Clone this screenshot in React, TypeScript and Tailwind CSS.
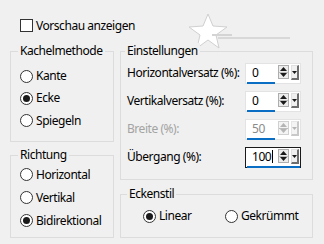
import React from "react";

const font = { fontFamily: '"Noto Sans", "Segoe UI", sans-serif', letterSpacing: "-0.45px" };

function Radio({ checked, label }: { checked?: boolean; label: string }) {
  return (
    <div className="flex items-center gap-[3px]">
      <span className="w-[13px] h-[13px] rounded-full border border-[#333333] bg-white flex items-center justify-center shrink-0">
        {checked && <span className="w-[7px] h-[7px] rounded-full bg-[#1a1a1a]" />}
      </span>
      <span className="text-[12px] leading-[16px] text-black">{label}</span>
    </div>
  );
}

function Group({
  title,
  titleLeft,
  className,
  children,
}: {
  title: string;
  titleLeft: string;
  className: string;
  children: React.ReactNode;
}) {
  return (
    <div className={"relative border border-[#dcdcdc] " + className}>
      <span
        className={
          "absolute -top-[9px] px-[2px] bg-[#f0f0f0] text-[12px] leading-[16px] text-black " + titleLeft
        }
      >
        {title}
      </span>
      {children}
    </div>
  );
}

function Spin({
  value,
  disabled,
  focused,
}: {
  value: string;
  disabled?: boolean;
  focused?: boolean;
}) {
  const arrow = disabled ? "#b5b5b5" : "#1a1a1a";
  return (
    <div
      className={
        "relative w-[56px] h-[21px] bg-white flex items-start border shrink-0 " +
        (focused ? "border-[#1a1a1a]" : "border-[#e3e3e3]")
      }
    >
      <div className="w-[31px] h-full flex items-center pl-[6px] pb-[2px]">
        <span
          className={
            "text-[12px] leading-[16px] " + (disabled ? "text-[#8a8a8a]" : "text-black")
          }
        >
          {value}
        </span>
        {focused && <span className="w-[1px] h-[13px] bg-black ml-[1px]" />}
      </div>
      <div
        className={
          "mt-[1px] ml-[1px] w-[11px] h-[14px] border flex flex-col " +
          (disabled ? "border-[#d0d0d0] bg-[#f4f4f4]" : "border-[#adadad] bg-[#ececec]")
        }
      >
        <div className="flex-1 flex items-center justify-center border-b border-[#bdbdbd]">
          <svg width="7" height="4" viewBox="0 0 7 4">
            <polygon points="3.5,0 7,4 0,4" fill={arrow} />
          </svg>
        </div>
        <div className="flex-1 flex items-center justify-center">
          <svg width="7" height="4" viewBox="0 0 7 4">
            <polygon points="0,0 7,0 3.5,4" fill={arrow} />
          </svg>
        </div>
      </div>
      <div
        className={
          "mt-[1px] ml-[2px] w-[8px] h-[15px] border-t border-l border-r-2 border-b-2 flex items-center justify-center " +
          (disabled
            ? "border-t-[#e6e6e6] border-l-[#e6e6e6] border-r-[#c8c8c8] border-b-[#c8c8c8] bg-[#f4f4f4]"
            : "border-t-[#e0e0e0] border-l-[#e0e0e0] border-r-[#6e6e6e] border-b-[#6e6e6e] bg-[#f0f0f0]")
        }
      >
        <svg width="5" height="3" viewBox="0 0 5 3">
          <polygon points="0,0 5,0 2.5,3" fill={arrow} />
        </svg>
      </div>
      <div
        className={
          "absolute bottom-[-1px] left-[1px] h-[2px] bg-[#0a6ec5] " +
          (focused ? "w-[53px]" : "w-[28px]")
        }
      />
    </div>
  );
}

function Row({
  label,
  value,
  disabled,
  focused,
}: {
  label: string;
  value: string;
  disabled?: boolean;
  focused?: boolean;
}) {
  return (
    <div className="h-[21px] flex items-center">
      <span
        className={
          "flex-1 whitespace-nowrap text-[12px] leading-[16px] pb-[2px] " +
          (disabled ? "text-[#a3a3a3]" : "text-black")
        }
      >
        {label}
      </span>
      <Spin value={value} disabled={disabled} focused={focused} />
    </div>
  );
}

export default function App() {
  return (
    <div className="relative w-[324px] h-[244px] bg-[#f0f0f0] overflow-hidden" style={font}>
      {/* watermark star */}
      <div className="absolute left-[186px] top-[13px] pointer-events-none">
        <svg width="110" height="36" viewBox="0 0 110 36">
          <polygon
            points="22,1 27,13 41,14 30,22 33,35 22,27 11,35 14,22 3,14 17,13"
            fill="#ffffff"
            stroke="#d0d0d0"
            strokeWidth="1"
          />
          <rect x="26" y="21" width="20" height="2" fill="#d4d4d4" />
          <rect x="32" y="24" width="72" height="2" fill="#d8d8d8" />
        </svg>
      </div>

      <div className="mt-[18px] pl-[20px] flex items-center gap-[3px] h-[15px]">
        <span className="w-[13px] h-[13px] border border-[#333333] bg-white" />
        <span className="text-[12px] leading-[15px] text-black">Vorschau anzeigen</span>
      </div>

      <div className="mt-[18px] pl-[10px] flex gap-[6px]">
        <div className="w-[104px] flex flex-col gap-[13px]">
          <Group title="Kachelmethode" titleLeft="left-[7px]" className="h-[91px] pt-[13px] pl-[9px]">
            <div className="flex flex-col">
              <div className="h-[22px] flex items-center">
                <Radio label="Kante" />
              </div>
              <div className="h-[22px] flex items-center">
                <Radio checked label="Ecke" />
              </div>
              <div className="h-[23px] flex items-center">
                <Radio label="Spiegeln" />
              </div>
            </div>
          </Group>
          <Group title="Richtung" titleLeft="left-[7px]" className="h-[83px] pt-[7px] pl-[9px]">
            <div className="flex flex-col">
              <div className="h-[23px] flex items-center">
                <Radio label="Horizontal" />
              </div>
              <div className="h-[23px] flex items-center">
                <Radio label="Vertikal" />
              </div>
              <div className="h-[23px] flex items-center">
                <Radio checked label="Bidirektional" />
              </div>
            </div>
          </Group>
        </div>

        <div className="w-[193px] flex flex-col gap-[14px]">
          <Group
            title="Einstellungen"
            titleLeft="left-[4px]"
            className="h-[129px] pt-[11px] pl-[6px] pr-[11px]"
          >
            <div className="flex flex-col gap-[7px]">
              <Row label="Horizontalversatz (%):" value="0" />
              <Row label="Vertikalversatz (%):" value="0" />
              <Row label="Breite (%):" value="50" disabled />
              <Row label="Übergang (%):" value="100" focused />
            </div>
          </Group>
          <Group
            title="Eckenstil"
            titleLeft="left-[6px]"
            className="h-[44px] pl-[22px] flex items-center"
          >
            <div className="w-[82px]">
              <Radio checked label="Linear" />
            </div>
            <Radio label="Gekrümmt" />
          </Group>
        </div>
      </div>
    </div>
  );
}
